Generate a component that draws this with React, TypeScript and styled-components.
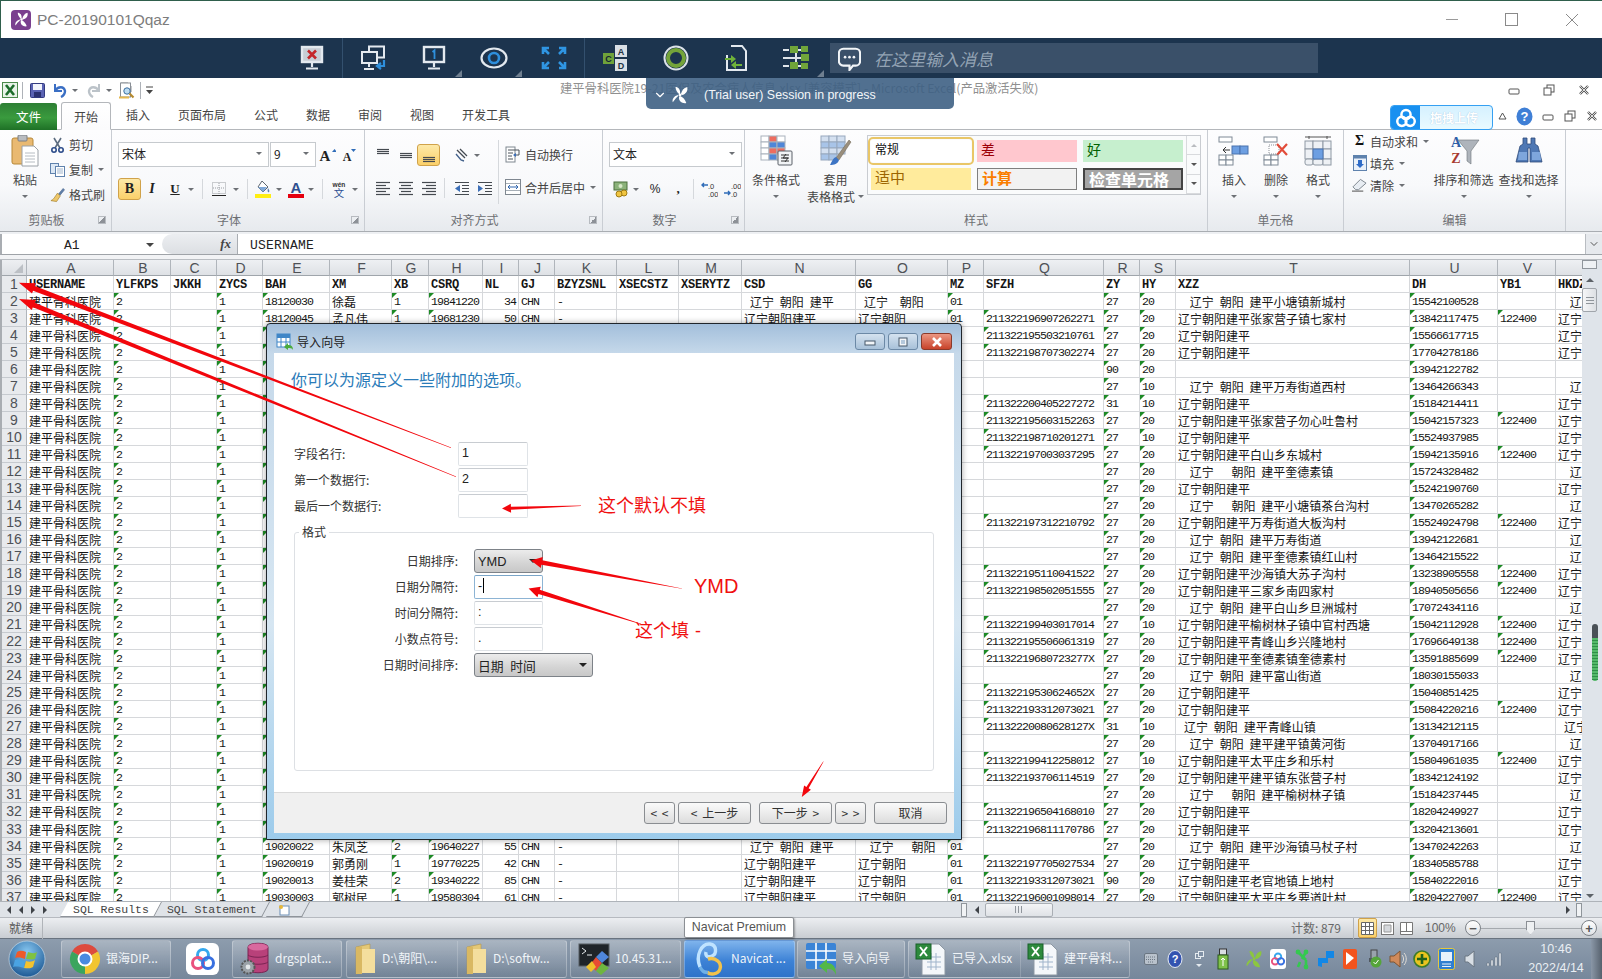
import React from 'react';
import styled, { createGlobalStyle } from 'styled-components';
import { ChevronDown } from 'lucide-react';

const CJK = `"Noto Sans CJK SC", "Liberation Sans", sans-serif`;
const SANS = `"Liberation Sans", "Noto Sans CJK SC", sans-serif`;
const MONO = `"Liberation Mono", "Noto Sans CJK SC", monospace`;

const Global = createGlobalStyle`
  html, body { margin: 0; padding: 0; width: 1602px; height: 979px; overflow: hidden; background: #fff; }
  body { font-family: ${CJK}; font-size: 12px; color: #333; }
  svg { display: block; }
  * { box-sizing: border-box; }
`;

/* ---------- page shell ---------- */
const Page = styled.div`
  position: relative; width: 1602px; height: 979px; overflow: hidden;
  display: flex; flex-direction: column;
`;
const TitleBar = styled.div`
  height: 38px; display: flex; align-items: center; padding-left: 10px;
  background: #fff; border-top: 1px solid #2f5f4c; border-left: 1px solid #2f5f4c;
`;
const AppLogo = styled.div`
  width: 20px; height: 20px; border-radius: 4px; background: #7a3f8f;
  display: flex; align-items: center; justify-content: center; margin-right: 6px;
`;
const TitleText = styled.div`
  font: 15.5px ${SANS}; color: #7d7d7d;
`;
const WinControls = styled.div`
  margin-left: auto; display: flex; padding-right: 0;
`;
const WinCtl = styled.div<{ $w: number }>`
  width: ${p => p.$w}px; display: flex; align-items: center; justify-content: center; height: 26px;
`;

const NavyBar = styled.div`
  height: 40px; background: #1c344e; display: flex; align-items: center; padding-left: 282px;
`;
const ToolBtn = styled.div<{ $corner?: boolean }>`
  position: relative; width: 60px; height: 40px; display: flex; align-items: center; justify-content: center;
  ${p => p.$corner ? `&::after { content: ''; position: absolute; right: 2px; bottom: 1px; border-style: solid; border-width: 0 0 7px 7px; border-color: transparent transparent #6f7f90 transparent; }` : ''}
`;
const ToolSep = styled.div`
  width: 1px; height: 40px; background: #33506e; margin-right: 1px;
`;
const ChatBox = styled.div`
  margin-left: 4px; width: 488px; height: 30px; background: #3a5069; display: flex; align-items: center;
  padding-left: 8px;
`;
const ChatHint = styled.div`
  margin-left: 13px; font-size: 17px; font-style: italic; color: #93a3b4; letter-spacing: 0;
`;

/* ---------- excel quick access + tabs ---------- */
const QatRow = styled.div`
  height: 24px; background: #fff; display: flex; align-items: center; padding-left: 2px;
`;
const QatItem = styled.div<{ $w: number; $ml?: number }>`
  width: ${p => p.$w}px; margin-left: ${p => p.$ml || 0}px; height: 20px; display: flex; align-items: center; justify-content: center;
`;
const QatSep = styled.div<{ $ml: number }>`
  width: 1px; height: 17px; background: #aeb2b8; margin-left: ${p => p.$ml}px;
`;
const DocTitle = styled.div`
  margin-left: 407px; font-size: 12.3px; color: #8f8f8f; white-space: nowrap; margin-top: -4px;
`;
const TabRow = styled.div`
  height: 28px; display: flex; align-items: flex-end; background: #fff;
  border-bottom: 1px solid #b4b7bb; position: relative;
`;
const FileTab = styled.div`
  width: 57px; height: 27px; margin-right: 4px; margin-bottom: -1px; color: #fff; font-size: 12.5px;
  display: flex; align-items: center; justify-content: center;
  background: linear-gradient(180deg, #2d7f34 0%, #3a9b3e 55%, #1e7026 100%); border-radius: 3px 3px 0 0;
`;
const HomeTab = styled.div`
  width: 50px; height: 28px; margin-right: 1px; margin-bottom: -1px; font-size: 12px; color: #444;
  display: flex; align-items: center; justify-content: center;
  background: linear-gradient(180deg, #fff, #fbfbfc); border: 1px solid #b4b7bb; border-bottom-color: #fbfbfc; border-radius: 3px 3px 0 0;
`;
const TabItem = styled.div`
  padding: 0 14px; height: 27px; line-height: 26px; font-size: 12px; color: #444;
`;
const RightCluster = styled.div`
  margin-left: auto; display: flex; align-items: center; height: 26px; margin-bottom: 0;
`;
const UploadPill = styled.div`
  width: 103px; height: 25px; margin-bottom: -3px; display: flex; border-radius: 4px; border: 1px solid #35a0f2; overflow: hidden;
  background: linear-gradient(180deg, #d5f1ff, #eafaff);
`;
const UploadLogo = styled.div`
  width: 29px; background: #1890f0; display: flex; align-items: center; justify-content: center;
`;
const UploadText = styled.div`
  margin-left: 10px; line-height: 23px; font-weight: 700; color: #fff; font-size: 12px; text-shadow: 0 0 1px #9bd; 
`;
const HelpSlot = styled.div<{ $w: number }>`
  width: ${p => p.$w}px; display: flex; justify-content: center; align-items: center;
`;

/* ---------- ribbon ---------- */
const Ribbon = styled.div`
  height: 102px; display: flex;
  background: linear-gradient(180deg, #fdfdfe 0%, #f8f9fb 55%, #e7eaee 100%);
  border-bottom: 1px solid #a9adb2;
`;
const Group = styled.div<{ $w: number }>`
  width: ${p => p.$w}px; display: flex; flex-direction: column; border-right: 1px solid #c9cdd3; flex: none;
`;
const GroupBody = styled.div<{ $pad?: string; $col?: boolean }>`
  height: 80px; display: flex; flex-direction: ${p => p.$col ? 'column' : 'row'}; padding: ${p => p.$pad || '0'};
`;
const GroupLabel = styled.div<{ $launch?: boolean }>`
  position: relative; height: 21px; line-height: 20px; text-align: center; color: #6d6f73; font-size: 12px;
  padding-right: ${p => p.$launch ? 18 : 0}px;
`;
const Launcher = styled.i`
  position: absolute; right: 5px; top: 6px; width: 8px; height: 8px; border: 1px solid #b7bbc0; border-top-width: 1px;
  background: linear-gradient(135deg, transparent 50%, #8d9197 50%);
`;
const BigBtn = styled.div<{ $w: number; $ml?: number; $mr?: number; $auto?: boolean }>`
  width: ${p => p.$w}px; padding-top: 5px; display: flex; flex-direction: column; align-items: center; flex: none;
  margin-left: ${p => p.$auto ? 'auto' : `${p.$ml || 0}px`}; margin-right: ${p => p.$mr || 0}px;
`;
const BigIcon = styled.div`
  height: 32px; margin-bottom: 4px; display: flex; align-items: center; justify-content: center;
`;
const BigLabel = styled.div`
  line-height: 17px; color: #444; font-size: 12px; white-space: nowrap; display: flex; align-items: center;
`;
const BigCaret = styled.div`
  height: 17px; display: flex; align-items: center; justify-content: center;
`;
const Caret = styled.i<{ $ml?: number }>`
  display: inline-block; width: 0; height: 0; border-left: 3px solid transparent; border-right: 3px solid transparent;
  border-top: 3px solid #6d7075; margin-left: ${p => p.$ml || 0}px; flex: none;
`;
const SmallCol = styled.div<{ $ml?: number; $pt: number }>`
  margin-left: ${p => p.$ml || 0}px; padding-top: ${p => p.$pt}px; display: flex; flex-direction: column; flex: none;
`;
const SmallRow = styled.div<{ $h: number; $mt?: number }>`
  height: ${p => p.$h}px; margin-top: ${p => p.$mt || 0}px; padding-bottom: 2px; display: flex; align-items: center; color: #444; font-size: 12px; white-space: nowrap;
`;
const RowIcon = styled.div<{ $w: number; $mr: number }>`
  width: ${p => p.$w}px; margin-right: ${p => p.$mr}px; display: flex; justify-content: center; align-items: center; flex: none;
`;
const SigmaGlyph = styled.span`
  font: 700 14px "Liberation Serif", serif; color: #111;
`;
const ComboBox = styled.div<{ $w: number; $ml?: number }>`
  width: ${p => p.$w}px; margin-left: ${p => p.$ml || 0}px; height: 25px; background: #fff; border: 1px solid #c6cace; flex: none;
  display: flex; align-items: center; justify-content: space-between; padding: 0 6px 2px 3px; color: #222; font-size: 12px;
`;
const ToolRow = styled.div<{ $mt?: number }>`
  display: flex; align-items: center; height: 22px; margin-top: ${p => p.$mt || 0}px;
`;
const ComboRow = styled.div`
  display: flex; align-items: center; height: 25px;
`;
const Slot = styled.div<{ $w: number; $ml?: number; $on?: boolean }>`
  width: ${p => p.$w}px; margin-left: ${p => p.$ml || 0}px; height: 22px; display: flex; align-items: center; justify-content: center; flex: none;
  color: #222; font-family: ${SANS};
  ${p => p.$on ? `background: linear-gradient(180deg,#fde9a8,#fbd06a); border: 1px solid #d0a24a; border-radius: 3px;` : ''}
`;
const SerifGlyph = styled.span<{ $i?: boolean; $u?: boolean; $size: number }>`
  font: ${p => p.$i ? 'italic ' : ''}700 ${p => p.$size}px "Liberation Serif", serif; color: #222;
  text-decoration: ${p => p.$u ? 'underline' : 'none'};
`;
const VSep = styled.div<{ $ml?: number }>`
  width: 1px; height: 20px; background: #d5d8dc; margin-left: ${p => p.$ml || 0}px; flex: none;
`;
const TallSep = styled.div`
  width: 1px; height: 64px; background: #d5d8dc; margin-top: 10px; margin-left: 0; flex: none;
`;
const AlignCol = styled.div`
  width: 127px; padding-top: 14px; flex: none;
`;
const WrapCol = styled.div`
  padding: 14px 0 0 6px; flex: none;
`;
const Gallery = styled.div`
  width: 334px; height: 60px; margin: 5px 0 0 2px; border: 1px solid #c9ccd1; background: #fafbfc; display: flex; flex: none;
`;
const GalleryGrid = styled.div`
  display: grid; grid-template-columns: repeat(3, 100px); grid-template-rows: 22px 22px; gap: 6px; padding: 4px 0 0 3px;
`;
const StyleCell = styled.div<{ $bg: string; $fg: string; $size: number; $bold?: boolean; $bd?: string; $sel?: boolean }>`
  background: ${p => p.$bg}; color: ${p => p.$fg}; font-size: ${p => p.$size}px; font-weight: ${p => p.$bold ? 700 : 400};
  line-height: 18px; padding-left: 4px; white-space: nowrap; overflow: hidden;
  border: ${p => p.$bd || 'none'};
  ${p => p.$sel ? `outline: 2px solid #e9c667; outline-offset: 1px; border-radius: 2px;` : ''}
`;
const GalleryScroll = styled.div`
  margin-left: auto; width: 14px; border-left: 1px solid #d8dadd; display: flex; flex-direction: column;
`;
const GalleryStep = styled.div`
  flex: 1; display: flex; align-items: center; justify-content: center; border-bottom: 1px solid #d8dadd;
`;

/* ---------- formula bar ---------- */
const FormulaStrip = styled.div`
  height: 2px; background: #eef0f3;
`;
const FormulaBar = styled.div`
  height: 21px; display: flex; align-items: stretch; background: #fff; border-bottom: 1px solid #9fa3a8; border-left: 2px solid #a9adb2;
`;
const NameBox = styled.div`
  width: 160px; padding: 2px 0 0 62px; display: flex; align-items: center; font: 13px ${MONO}; color: #222; flex: none;
`;
const NameCaret = styled.i`
  width: 0; height: 0; border-left: 4px solid transparent; border-right: 4px solid transparent; border-top: 4px solid #444; margin-left: 66px;
`;
const FxSlot = styled.div`
  width: 76px; background: linear-gradient(180deg, #eceef1, #dcdfe3); border-radius: 10px 0 0 10px; border-right: 1px solid #a9adb2;
  display: flex; align-items: center; justify-content: flex-end; padding-right: 6px; flex: none;
`;
const FxText = styled.span`
  font: italic 700 13px "Liberation Serif", serif; color: #444;
`;
const FormulaText = styled.div`
  margin-left: 12px; padding-top: 2px; font: 13px/20px ${MONO}; color: #222; letter-spacing: .2px;
`;
const FormulaEnd = styled.div`
  margin-left: auto; width: 17px; display: flex; align-items: center; justify-content: center; background: #e6e9ed; border-left: 1px solid #b9bdc2;
`;
const GapStrip = styled.div`
  height: 5px; background: #f2f3f5; border-bottom: 1px solid #b9bdc2;
`;

/* ---------- sheet ---------- */
const SheetArea = styled.div`
  height: 641px; display: flex;
`;
const GridViewport = styled.div`
  width: 1582px; height: 641px; overflow: hidden; flex: none; border-left: 2px solid #a9adb2;
`;
const COLS = [25, 87, 57, 46, 46, 67, 62, 37, 54, 36, 36, 62, 62, 63, 114, 92, 36, 120, 36, 36, 234, 88, 58, 28];
const GridTable = styled.div`
  display: grid; grid-template-columns: ${COLS.map(c => c + 'px').join(' ')};
  grid-template-rows: 16px; grid-auto-rows: 17.03px;
`;
const Corner = styled.div`
  position: relative; background: linear-gradient(180deg, #edeff2, #dde0e4); border-right: 1px solid #b0b5bb; border-bottom: 1px solid #9fa5ab;
  &::after { content: ''; position: absolute; right: 3px; bottom: 2px; border-style: solid; border-width: 0 0 9px 9px; border-color: transparent transparent #bcc0c5 transparent; }
`;
const ColHead = styled.div`
  background: linear-gradient(180deg, #eef0f3, #dee1e5); border-right: 1px solid #b0b5bb; border-bottom: 1px solid #9fa5ab;
  text-align: center; padding-left: 2px; font: 14px/16px ${SANS}; color: #4e5156;
`;
const RowHead = styled.div`
  background: #e8eaed; border-right: 1px solid #b0b5bb; border-bottom: 1px solid #c6cacf;
  text-align: center; font: 14px/17px ${SANS}; color: #4e5156;
`;
const Cell = styled.div<{ $kind: 'cjk' | 'num' | 'head'; $tri?: boolean; $right?: boolean }>`
  position: relative; background: #fff; border-right: 1px solid #d6d8db; border-bottom: 1px solid #d6d8db;
  overflow: hidden; white-space: pre; padding: 0 2px; color: #151515; text-align: ${p => p.$right ? 'right' : 'left'};
  ${p => p.$kind === 'cjk' && `font: 12px/17px ${CJK}; word-spacing: 3.2px;`}
  ${p => p.$kind === 'num' && `font: 11.6px/18px ${MONO}; letter-spacing: -.96px;`}
  ${p => p.$kind === 'head' && `font: 700 12px/18px ${MONO}; letter-spacing: -.2px;`}
  ${p => p.$tri ? `&::before { content: ''; position: absolute; left: 0; top: 0; border-style: solid; border-width: 5px 5px 0 0; border-color: #1d8a25 transparent transparent transparent; }` : ''}
`;

const VScroll = styled.div`
  position: relative; width: 20px; background: #dfe4ea; display: flex; flex-direction: column; align-items: stretch; flex: none;
`;
const SplitBtn = styled.div`
  height: 9px; width: 15px; background: #eef1f4; border: 1px solid #8f959b; margin: 0 0 5px 0;
`;
const ArrowBox = styled.div`
  height: 11px; width: 15px; display: flex; justify-content: center; align-items: center;
`;
const Tri = styled.i<{ $dir: 'u' | 'd' | 'l' | 'r'; $s?: number; $c?: string; $ml?: number }>`
  width: 0; height: 0; display: block; border: ${p => p.$s || 4}px solid transparent; margin-left: ${p => p.$ml || 0}px;
  ${p => p.$dir === 'u' && `border-top: 0; border-bottom-color: ${p.$c || '#5d6268'};`}
  ${p => p.$dir === 'd' && `border-bottom: 0; border-top-color: ${p.$c || '#5d6268'};`}
  ${p => p.$dir === 'l' && `border-left: 0; border-right-color: ${p.$c || '#3f4348'};`}
  ${p => p.$dir === 'r' && `border-right: 0; border-left-color: ${p.$c || '#3f4348'};`}
`;
const VThumb = styled.div`
  width: 15px; height: 24px; margin-top: 3px; background: linear-gradient(90deg, #f5f6f8, #dde0e4); border: 1px solid #a0a5ab; border-radius: 2px;
  display: flex; align-items: center; justify-content: center;
`;
const GripLines = styled.div`
  width: 8px; height: 7px; background: repeating-linear-gradient(180deg, #8f959b 0 1px, transparent 1px 3px);
`;
const VSpacer = styled.div`
  flex: 1;
`;
const LevelPill = styled.div`
  position: absolute; left: 10px; top: 364px; width: 6px; height: 57px; border-radius: 3px;
  background: linear-gradient(180deg, #4a5157 0, #4a5157 24%, #55b96a 24%, #55b96a 100%);
  &::after { content: ''; position: absolute; inset: 14px 0 0 0; background: repeating-linear-gradient(180deg, transparent 0 2px, #2f8f47 2px 3px); }
`;

/* ---------- sheet tabs / status ---------- */
const SheetTabsBar = styled.div`
  height: 16px; display: flex; background: #dfe3e8; border-top: 1px solid #aeb3b9;
`;
const TabNav = styled.div`
  width: 64px; display: flex; align-items: center; padding-left: 7px; gap: 8px; flex: none;
`;
const SheetTab = styled.div<{ $active?: boolean }>`
  position: relative; z-index: 0; height: 15px; padding: 0 9px; font: 11.5px/15px ${MONO}; color: #444; margin-right: ${p => p.$active ? 0 : 4}px; white-space: nowrap;
  &::before { content: ''; position: absolute; inset: 0; z-index: -1; transform: skewX(-28deg);
    background: ${p => p.$active ? '#fff' : 'transparent'}; border-right: 1px solid #8f949a; border-bottom: 1px solid #8f949a; }
`;
const NewSheet = styled(SheetTab)`
  width: 36px; padding: 0 8px; display: flex; align-items: center;
`;
const TabSpacer = styled.div`
  width: 651px; flex: none;
`;
const HScroll = styled.div`
  flex: 1; display: flex; align-items: center; padding-left: 0; margin-right: 20px; background: #dfe3e8;
`;
const HSplit = styled.div<{ $ml?: number }>`
  width: 6px; height: 14px; margin-left: ${p => p.$ml || 0}px; background: #f1f3f5; border: 1px solid #8f959b; flex: none;
`;
const HThumb = styled.div`
  width: 68px; height: 14px; margin-left: 6px; background: linear-gradient(180deg, #f4f5f7, #dfe2e6); border: 1px solid #a9aeb4; border-radius: 2px;
  display: flex; align-items: center; justify-content: center; flex: none;
`;
const HGrip = styled.div`
  width: 7px; height: 7px; background: repeating-linear-gradient(90deg, #8f959b 0 1px, transparent 1px 3px);
`;
const StatusBar = styled.div`
  height: 22px; display: flex; align-items: center; padding-right: 5px;
  background: linear-gradient(180deg, #eceef1, #c9cdd2); border-top: 1px solid #b6bac0; border-bottom: 1px solid #6a7480; color: #666; font-size: 12px;
`;
const StatusReady = styled.div`
  width: 43px; height: 21px; line-height: 20px; padding-left: 9px; border-right: 1px solid #b0b4b9; color: #555;
`;
const StatusCount = styled.div`
  margin-left: auto; width: 63px; border-right: 1px solid #b0b4b9; height: 21px; line-height: 20px; margin-right: 4px; font-family: ${CJK}; color: #666;
`;
const ViewBtn = styled.div<{ $w: number; $on?: boolean }>`
  width: ${p => p.$w}px; height: 20px; display: flex; align-items: center; justify-content: center;
  ${p => p.$on ? `background: linear-gradient(180deg,#fde9a8,#fbd06a); border: 1px solid #d0a24a; border-radius: 2px;` : ''}
`;
const ZoomPct = styled.div`
  width: 40px; margin-left: 9px; font: 12px ${SANS}; color: #666;
`;
const ZoomCircle = styled.div`
  width: 16px; height: 16px; border-radius: 50%; border: 1px solid #7d8288; background: linear-gradient(180deg, #fff, #dfe1e4);
  display: flex; align-items: center; justify-content: center; color: #555; font: 700 13px/13px ${SANS}; flex: none;
`;
const ZoomTrack = styled.div`
  position: relative; width: 100px; height: 1px; background: #a5a9ae; flex: none;
`;
const ZoomThumb = styled.div`
  position: absolute; left: 45px; top: -7px; width: 9px; height: 14px; background: #eef0f2; border: 1px solid #8a8e94;
  clip-path: polygon(0 0, 100% 0, 100% 65%, 50% 100%, 0 65%);
`;

/* ---------- taskbar ---------- */
const Taskbar = styled.div`
  flex: 1; display: flex; background: linear-gradient(180deg, #8d9cad, #76879b);
`;
const OrbSlot = styled.div`
  width: 61px; display: flex; align-items: center; justify-content: center; padding-right: 8px; flex: none;
`;
const TaskBtn = styled.div<{ $w: number; $ml?: number; $active?: boolean }>`
  width: ${p => p.$w}px; margin: 1px 0 1px ${p => p.$ml || 0}px; display: flex; align-items: center; flex: none; padding-left: 7px; gap: 5px;
  border: 1px solid rgba(255,255,255,.28); border-radius: 3px; color: #f0f4f8; font-size: 12px; white-space: nowrap; overflow: hidden;
  background: ${p => p.$active
    ? 'linear-gradient(180deg,#7fb4ec,#3d82d6 55%,#2e73c9)'
    : 'linear-gradient(180deg,rgba(255,255,255,.26),rgba(255,255,255,.1) 50%,rgba(0,0,0,.04))'};
`;
const TaskLabel = styled.span`
  margin-top: -4px;
`;
const TaskSeg = styled.div<{ $w: number }>`
  width: ${p => p.$w}px; height: 100%; display: flex; align-items: center; gap: 5px; padding-left: 6px; flex: none;
  & + & { border-left: 1px solid rgba(255,255,255,.18); }
`;
const TaskGroup = styled(TaskBtn)`
  padding-left: 0; gap: 0;
`;
const PlainIcon = styled.div`
  width: 61px; display: flex; align-items: center; justify-content: center; flex: none; padding-left: 2px;
`;
const Tray = styled.div`
  flex: 1; display: flex; align-items: center; padding-left: 9px;
`;
const TraySlot = styled.div<{ $ml?: number }>`
  width: 24px; margin-left: ${p => p.$ml || 0}px; display: flex; align-items: center; justify-content: center; flex: none;
`;
const Clock = styled.div`
  width: 70px; margin-left: 15px; text-align: center; color: #e9eef3; font: 12.5px/19px ${SANS}; flex: none;
`;
const ShowDesk = styled.div`
  margin-left: auto; width: 11px; height: 100%; background: linear-gradient(90deg, #8a97a7, #56616d);
`;
const TrayStack = styled.div`
  display: flex; flex-direction: column; align-items: center; gap: 5px; color: #e5ebf0;
`;

/* ---------- overlays ---------- */
const Toast = styled.div`
  position: absolute; left: 646px; top: 78px; width: 308px; height: 31px; border-radius: 0 0 5px 5px;
  background: rgba(62, 97, 132, .9); display: flex; align-items: center; padding: 3px 0 0 7px; color: #fff;
`;
const ToastFan = styled.div`
  margin-left: 4px;
`;
const ToastText = styled.div`
  margin-left: 15px; font: 12.4px ${SANS}; color: #f3f6f9; white-space: nowrap;
`;
const Tip = styled.div`
  position: absolute; left: 684px; top: 917px; width: 110px; height: 21px; background: #fff; border: 1px solid #8b8f94;
  border-radius: 2px; font: 12.4px/19px ${SANS}; color: #555; text-align: center; box-shadow: 1px 1px 2px rgba(0,0,0,.3);
`;

/* ---------- dialog ---------- */
const Dialog = styled.div`
  position: absolute; left: 266px; top: 323px; width: 696px; height: 517px; display: flex; flex-direction: column;
  border: 1px solid #20262c; border-radius: 4px 4px 0 0; box-shadow: 0 0 6px rgba(0,0,0,.35);
  background: linear-gradient(180deg, #a3bfdb 0, #c6d9ea 30px, #d6e6f2 300px, #9ccbeb 100%);
`;
const DlgTitle = styled.div`
  height: 29px; display: flex; align-items: center; padding: 6px 9px 0 9px; flex: none;
`;
const DlgTitleText = styled.div`
  margin-left: 3px; font-size: 12px; color: #222; letter-spacing: .1px;
`;
const DlgWinBtns = styled.div`
  margin-left: auto; display: flex; gap: 3px;
`;
const DlgWinBtn = styled.div<{ $close?: boolean }>`
  width: ${p => p.$close ? 31 : 30}px; height: 17px; border-radius: 3px; display: flex; align-items: center; justify-content: center;
  border: 1px solid ${p => p.$close ? '#8a3a2a' : '#6c89a6'};
  background: ${p => p.$close ? 'linear-gradient(180deg,#eb9682,#c8432a)' : 'linear-gradient(180deg,#d4e2ef,#a8c1d9)'};
  color: #fff;
`;
const DlgClient = styled.div`
  flex: 1; margin: 0 7px 6px 7px; background: #fff; display: flex; flex-direction: column; min-height: 0;
`;
const DlgContent = styled.div`
  flex: 1; padding: 15px 19px 0 20px; position: relative;
`;
const DlgHeading = styled.div`
  font-size: 16px; line-height: 22px; color: #2b7cb9; margin-left: -3px; white-space: nowrap;
`;
const FormList = styled.div<{ $mt: number }>`
  margin-top: ${p => p.$mt}px; display: flex; flex-direction: column; gap: 2px;
`;
const FormLine = styled.div`
  display: flex; align-items: center; height: 24px; font-size: 12px; color: #333;
`;
const FormLabel = styled.div<{ $w: number; $right?: boolean }>`
  width: ${p => p.$w}px; text-align: ${p => p.$right ? 'right' : 'left'}; white-space: nowrap; padding-bottom: 2px; flex: none;
`;
const TextField = styled.div<{ $w: number; $focus?: boolean; $ml?: number }>`
  width: ${p => p.$w}px; height: 24px; margin-left: ${p => p.$ml || 0}px; background: #fff; flex: none; border-radius: 2px;
  border: 1px solid ${p => p.$focus ? '#8db4d4' : '#dfe3e7'}; border-top-color: ${p => p.$focus ? '#7aa5c8' : '#c8ccd1'};
  padding-left: 3px; font: 12.5px/20px ${SANS}; color: #222; position: relative;
`;
const TextCaret = styled.i`
  display: inline-block; width: 1px; height: 15px; background: #000; vertical-align: -3px; margin-left: 1px;
`;
const FormatGroup = styled.div`
  position: relative; width: 640px; height: 239px; margin-top: 14px; border: 1px solid #dde0e4; border-radius: 3px; padding: 16px 0 0 0;
`;
const Legend = styled.div`
  position: absolute; left: 4px; top: -9px; padding: 0 3px; background: #fff; font-size: 12px; line-height: 16px; color: #333;
`;
const SelectBox = styled.div<{ $w: number; $ml: number }>`
  width: ${p => p.$w}px; height: 24px; margin-left: ${p => p.$ml}px; flex: none; border: 1px solid #7d8288; border-radius: 3px;
  background: linear-gradient(180deg, #ececec, #d4d4d4 60%, #c8c8c8); display: flex; align-items: center; justify-content: space-between;
  padding: 0 5px 0 3px; font: 12.8px ${SANS}; color: #222; word-spacing: 3px;
`;
const DlgFooter = styled.div`
  height: 41px; background: #f0f0f0; border-top: 1px solid #d9d9d9; display: flex; justify-content: flex-end; padding: 9px 7px 0 0; flex: none;
`;
const DlgButton = styled.div<{ $w: number; $ml: number }>`
  width: ${p => p.$w}px; margin-left: ${p => p.$ml}px; height: 22px; border: 1px solid #8a8d91; border-radius: 3px;
  background: linear-gradient(180deg, #fafafa, #ececec 50%, #dcdcdc); font: 12px/20px ${CJK}; text-align: center; color: #333; white-space: pre; word-spacing: 2px;
`;
const AnnotLayer = styled.svg`
  position: absolute; left: 0; top: 0; width: 1602px; height: 979px; pointer-events: none;
`;
const Note = styled.div<{ $x: number; $y: number; $size: number }>`
  position: absolute; left: ${p => p.$x}px; top: ${p => p.$y}px; font: ${p => p.$size}px/24px ${SANS}; color: #f01010; white-space: pre; word-spacing: 1px;
`;

/* ---------- icons ---------- */
const S = ({ w, h, children }: { w: number; h: number; children?: React.ReactNode }) => (
  <svg width={w} height={h} viewBox={`0 0 ${w} ${h}`}>{children}</svg>
);
const MON = '#e3e9ef';
const MonBase = ({ fill = 'none' }: { fill?: string }) => (
  <>
    <rect x="3" y="2" width="20" height="15" fill={fill} stroke={MON} strokeWidth="2.4" />
    <path d="M13 18v4M7 23.5h12" stroke={MON} strokeWidth="2.2" />
  </>
);
const IcoRemoteOff = () => (
  <S w={26} h={26}><MonBase fill="#c7ced6" /><path d="M9 5.5l8 8M17 5.5l-8 8" stroke="#c4262a" strokeWidth="2.6" /></S>
);
const IcoTransfer = () => (
  <S w={28} h={26}>
    <rect x="9" y="1.5" width="15" height="11" fill="#1c344e" stroke={MON} strokeWidth="2" />
    <rect x="2" y="7" width="15" height="11" fill="#1c344e" stroke={MON} strokeWidth="2" />
    <path d="M9 19v3M4 24h10" stroke={MON} strokeWidth="2" />
    <path d="M24 15v6h-6M21 18l-4 3 4 3" fill="none" stroke="#2e8fdc" strokeWidth="2.2" />
  </S>
);
const IcoScreenOne = () => (
  <S w={26} h={26}><MonBase /><path d="M11.5 7l2-1.6V14" fill="none" stroke="#2e8fdc" strokeWidth="1.8" /></S>
);
const IcoEye = () => (
  <S w={28} h={22}>
    <ellipse cx="14" cy="11" rx="12.5" ry="9.5" fill="none" stroke={MON} strokeWidth="2.2" />
    <circle cx="14" cy="11" r="5" fill="none" stroke="#2e8fdc" strokeWidth="2.6" />
  </S>
);
const IcoExpand = () => (
  <S w={26} h={24}>
    <g fill="none" stroke="#2f95e2" strokeWidth="2.6">
      <path d="M2 8V2h6M2 2l6 6M24 8V2h-6M24 2l-6 6M2 16v6h6M2 22l6-6M24 16v6h-6M24 22l-6-6" />
    </g>
  </S>
);
const IcoDrives = () => (
  <S w={28} h={28}>
    <rect x="1" y="9" width="11" height="11" fill="#6fa23a" />
    <rect x="13" y="1" width="12" height="12" fill="#d9dfe5" />
    <rect x="13" y="15" width="12" height="12" fill="#d9dfe5" />
    <text x="6.5" y="18" fontSize="9" fontWeight="700" textAnchor="middle" fill="#123" fontFamily="Liberation Sans">C</text>
    <text x="19" y="10.5" fontSize="9" fontWeight="700" textAnchor="middle" fill="#234" fontFamily="Liberation Sans">A</text>
    <text x="19" y="24.5" fontSize="9" fontWeight="700" textAnchor="middle" fill="#234" fontFamily="Liberation Sans">D</text>
  </S>
);
const IcoRing = () => (
  <S w={26} h={26}>
    <circle cx="13" cy="13" r="11.5" fill="none" stroke="#dbe2e8" strokeWidth="2" />
    <circle cx="13" cy="13" r="8" fill="none" stroke="#74a43a" strokeWidth="4" />
  </S>
);
const IcoFileSwap = () => (
  <S w={24} h={26}>
    <path d="M7 1h11l4 5v19H3V10" fill="none" stroke={MON} strokeWidth="2" />
    <path d="M1 13h6V10l5 4-5 4v-3H1zM18 21h-6v3l-5-4 5-4v3h6z" fill="#6fb23a" />
  </S>
);
const IcoTree = () => (
  <S w={28} h={26}>
    <path d="M1 13h26M14 5v16M14 5h6M14 21h6M1 5h6M1 21h6" stroke="#dfe5ea" strokeWidth="2" />
    <rect x="8" y="1" width="8" height="7" fill="#70a53a" /><rect x="19" y="9" width="8" height="7" fill="#70a53a" />
    <rect x="8" y="17" width="8" height="7" fill="#70a53a" /><rect x="19" y="1" width="7" height="6" fill="#70a53a" /><rect x="19" y="18" width="7" height="6" fill="#70a53a" />
  </S>
);
const IcoChat = () => (
  <svg width="23" height="25" viewBox="0 0 26 28">
    <path d="M6 3h14a5 5 0 015 5v9a5 5 0 01-5 5h-3l-4 5v-5H6a5 5 0 01-5-5V8a5 5 0 015-5z" fill="none" stroke="#f2f5f8" strokeWidth="2.4" />
    <circle cx="8" cy="12.5" r="1.5" fill="#f2f5f8" /><circle cx="13" cy="12.5" r="1.5" fill="#f2f5f8" /><circle cx="18" cy="12.5" r="1.5" fill="#f2f5f8" />
  </svg>
);
const FanMark = ({ size = 14, c = '#fff' }: { size?: number; c?: string }) => (
  <svg width={size} height={size} viewBox="0 0 20 20">
    <path d="M11 9c1-4 3-7 7-8 1 4-1 8-6 9zM9 9C7 7 5 4 5 1c3 0 6 3 5 8zM10 11c3 1 6 4 7 8-4 1-9-2-8-7zM8 11c-2 2-4 4-6 7-1-3 1-7 6-8z" fill={c} />
    <circle cx="10" cy="10" r="1.6" fill={c} />
  </svg>
);
const BaiduMark = ({ size = 20, a = '#fff', b = '#fff', c = '#fff', sw = 3 }: { size?: number; a?: string; b?: string; c?: string; sw?: number }) => (
  <svg width={size} height={size} viewBox="0 0 24 24" fill="none" strokeWidth={sw}>
    <circle cx="12" cy="8" r="5.5" stroke={a} />
    <circle cx="7" cy="16" r="5.5" stroke={b} />
    <circle cx="17" cy="16" r="5.5" stroke={c} />
  </svg>
);
const XMark = ({ s = 14, c = '#666', sw = 1 }: { s?: number; c?: string; sw?: number }) => (
  <svg width={s} height={s} viewBox="0 0 14 14"><path d="M1 1l12 12M13 1L1 13" stroke={c} strokeWidth={sw} /></svg>
);
const MiniMin = () => <S w={12} h={10}><rect x="1" y="4" width="10" height="5" rx="1" fill="#fff" stroke="#555" /></S>;
const MiniRestore = () => <S w={12} h={12}><rect x="4" y="1" width="7" height="7" fill="#fff" stroke="#555" /><rect x="1" y="4" width="7" height="7" fill="#fff" stroke="#555" /></S>;
const MiniClose = () => <S w={12} h={12}><path d="M2 2l8 8M10 2l-8 8" stroke="#555" strokeWidth="2.4" /><path d="M2 2l8 8M10 2l-8 8" stroke="#fff" strokeWidth=".8" /></S>;

const IcoXlQat = () => (
  <S w={16} h={16}><rect x=".5" y=".5" width="15" height="15" fill="#e8f3e8" stroke="#4b8a4b" /><path d="M4 3l8 10M12 3L4 13" stroke="#1c6d2a" strokeWidth="2.6" /></S>
);
const IcoSave = () => (
  <S w={15} h={15}><rect x=".5" y=".5" width="14" height="14" rx="1" fill="#5b63b3" stroke="#333a80" /><rect x="3" y="1" width="9" height="6" fill="#f2f4fb" /><rect x="4" y="9" width="7" height="5" fill="#2c3170" /></S>
);
const IcoUndo = ({ c = '#3b6fc4' }: { c?: string }) => (
  <S w={14} h={15}><path d="M2 1v7h7" fill="none" stroke={c} strokeWidth="2" /><path d="M2 8c3-5 9-5 10 0 0 3-2 5-4 6" fill="none" stroke={c} strokeWidth="2.4" /></S>
);
const IcoRedo = () => (
  <S w={14} h={15}><path d="M12 1v7H5" fill="none" stroke="#bcc3c9" strokeWidth="2" /><path d="M12 8C9 3 3 3 2 8c0 3 2 5 4 6" fill="none" stroke="#bcc3c9" strokeWidth="2.4" /></S>
);
const IcoPreview = () => (
  <S w={16} h={17}><path d="M2 1h7l3 3v6" fill="#fff" stroke="#8a8f96" /><rect x="1.5" y="1" width="10" height="14" fill="#fff" stroke="#8a8f96" /><circle cx="8" cy="9" r="3.2" fill="#bcdcf2" stroke="#3d6fa0" /><path d="M10.5 11.5l4 4" stroke="#b58a2e" strokeWidth="2.2" /><rect x="0" y="14.5" width="10" height="2" fill="#e5b84f" /></S>
);
const IcoCustom = () => <S w={7} h={9}><path d="M0 1h7" stroke="#444" /><path d="M0 4h7l-3.5 4z" fill="#444" /></S>;

const IcoPaste = () => (
  <S w={28} h={32}>
    <rect x="1" y="3" width="21" height="26" rx="2" fill="#e9b971" stroke="#b78838" />
    <rect x="7" y="0" width="9" height="6" rx="1" fill="#b9bcc0" stroke="#7b7e83" />
    <path d="M11 11h12l4 4v16H11z" fill="#fff" stroke="#9aa0a6" />
    <path d="M14 18h10M14 21h10M14 24h10M14 27h10" stroke="#b6bcc2" />
  </S>
);
const IcoScissors = () => (
  <S w={13} h={16}><path d="M3 1l6 10M10 1L4 11" stroke="#5d6d80" strokeWidth="1.6" /><circle cx="3" cy="13" r="2.2" fill="none" stroke="#2c4c8a" strokeWidth="1.6" /><circle cx="10" cy="13" r="2.2" fill="none" stroke="#2c4c8a" strokeWidth="1.6" /></S>
);
const IcoCopy = () => (
  <S w={15} h={14}><rect x=".5" y=".5" width="8" height="10" fill="#dce8f5" stroke="#5f82ad" /><rect x="5.5" y="3.5" width="9" height="10" fill="#fff" stroke="#5f82ad" /><path d="M7 6h6M7 8h6M7 10h6" stroke="#9fb4cc" /></S>
);
const IcoBrush = () => (
  <S w={16} h={16}><path d="M9 7l5-6 1.5 1.5-5 6z" fill="#5f7fa8" stroke="#44618a" strokeWidth=".6" /><path d="M8 6l3 3-4 6-6-1c3-1 4-4 7-8z" fill="#edc76b" stroke="#a27d28" strokeWidth=".7" /></S>
);
const Lines = ({ rows }: { rows: [number, number, number][] }) => (
  <S w={16} h={16}><g stroke="#454a50" strokeWidth="1.2">{rows.map((r, i) => <path key={i} d={`M${r[0]} ${r[2]}.5H${r[1]}`} />)}</g></S>
);
const AL_T: [number, number, number][] = [[2, 14, 2], [2, 14, 4], [2, 14, 6]];
const AL_M: [number, number, number][] = [[2, 14, 6], [2, 14, 8], [2, 14, 10]];
const AL_B: [number, number, number][] = [[2, 14, 10], [2, 14, 12], [2, 14, 14]];
const AH_L: [number, number, number][] = [[1, 15, 2], [1, 11, 5], [1, 15, 8], [1, 11, 11], [1, 15, 14]];
const AH_C: [number, number, number][] = [[1, 15, 2], [3, 13, 5], [1, 15, 8], [3, 13, 11], [1, 15, 14]];
const AH_R: [number, number, number][] = [[1, 15, 2], [5, 15, 5], [1, 15, 8], [5, 15, 11], [1, 15, 14]];
const IcoOrient = () => (
  <S w={16} h={16}><path d="M3 3l8 8M6 2l7 7" stroke="#444a52" strokeWidth="1.3" /><path d="M2 7l5 6 3 1" fill="none" stroke="#44628c" strokeWidth="1.4" /></S>
);
const IcoIndent = ({ flip }: { flip?: boolean }) => (
  <S w={16} h={16}>
    <g stroke="#454a50" strokeWidth="1.2"><path d="M1 2.5h14M8 5.5h7M8 8.5h7M8 11.5h7M1 14.5h14" /></g>
    <path d={flip ? 'M1 5l5 3.5-5 3.5z' : 'M6 5L1 8.5 6 12z'} fill="#3c6fb8" />
  </S>
);
const IcoWrap = () => (
  <S w={16} h={17}><rect x="1" y="1" width="9" height="15" fill="#fff" stroke="#7f8790" /><path d="M3 4h11v5H9M3 7h5M3 10h4M3 13h5" fill="none" stroke="#4b525a" /><path d="M11 7l-3 2 3 2z" fill="#3c6fb8" /></S>
);
const IcoMerge = () => (
  <S w={16} h={16}><rect x=".5" y=".5" width="15" height="15" fill="#fff" stroke="#7f8790" /><path d="M1 4.5h14M1 11.5h14" stroke="#a7afb7" /><path d="M3 8h10M3 8l2-2M3 8l2 2M13 8l-2-2M13 8l-2 2" stroke="#2e64ad" fill="none" /></S>
);
const IcoCurrency = () => (
  <S w={16} h={17}><rect x="1" y="1" width="13" height="8" fill="#8bb27a" stroke="#4a6f3c" /><circle cx="7.5" cy="5" r="2" fill="#d8e8c8" /><circle cx="11" cy="12" r="3" fill="#f1c541" stroke="#a07c15" /><circle cx="6" cy="13" r="3" fill="#f1c541" stroke="#a07c15" /></S>
);
const IcoDec = ({ add }: { add?: boolean }) => (
  <S w={18} h={17}>
    <text x="8" y="7.5" fontSize="7.5" fontFamily="Liberation Sans" fill="#333">{add ? '.0' : '.00'}</text>
    <text x="8" y="15.5" fontSize="7.5" fontFamily="Liberation Sans" fill="#333">{add ? '.00' : '.0'}</text>
    <path d={add ? 'M8 4H2M4 2L2 4l2 2' : 'M1 12h6M5 10l2 2-2 2'} fill="none" stroke="#2f6cb8" strokeWidth="1.4" />
  </S>
);
const IcoFill = () => (
  <S w={16} h={18}><path d="M7 1l6 6-5 5-5-5z" fill="#fff" stroke="#5d6670" /><path d="M3 7h9l-4 5z" fill="#7fa8d8" /><path d="M13 8c1 2 2 3 1 4s-2-1-1-4z" fill="#5d7fb0" /><rect x="0" y="14" width="16" height="4" fill="#ffee12" /></S>
);
const IcoFontColor = () => (
  <S w={16} h={18}><text x="8" y="12.5" fontFamily="Liberation Sans" fontWeight="700" fontSize="15" textAnchor="middle" fill="#2f4f8f">A</text><rect x="0" y="14" width="16" height="4" fill="#e5000f" /></S>
);
const IcoBorder = () => (
  <S w={14} h={14}><rect x=".5" y=".5" width="13" height="11" fill="none" stroke="#9a9ea3" strokeDasharray="1 1" /><path d="M7 1v11M1 6h12" stroke="#9a9ea3" strokeDasharray="1 1" /><path d="M0 13.5h14" stroke="#222" /></S>
);
const IcoPhonetic = () => (
  <S w={17} h={18}><text x="8.5" y="6.5" fontSize="7" fontWeight="700" textAnchor="middle" fontFamily="Liberation Sans" fill="#333">wén</text><text x="8.5" y="17" fontSize="11" textAnchor="middle" fontFamily="Noto Sans CJK SC" fill="#2b4f94">文</text></S>
);
const IcoCond = () => (
  <S w={34} h={32}>
    <g stroke="#a9b2bc" fill="#fff"><rect x="2" y="1" width="8" height="6" /><rect x="10" y="1" width="8" height="6" fill="#ee6d5f" /><rect x="18" y="1" width="8" height="6" /><rect x="2" y="7" width="8" height="6" /><rect x="10" y="7" width="8" height="6" fill="#4f86d8" /><rect x="18" y="7" width="8" height="6" fill="#4f86d8" /><rect x="2" y="13" width="8" height="6" /><rect x="10" y="13" width="8" height="6" fill="#ee6d5f" /><rect x="18" y="13" width="8" height="6" fill="#ee6d5f" /><rect x="2" y="19" width="8" height="6" /><rect x="10" y="19" width="8" height="6" fill="#4f86d8" /><rect x="18" y="19" width="8" height="6" /></g>
    <rect x="19" y="16" width="14" height="14" rx="1" fill="#f2f4f6" stroke="#5b6068" /><path d="M22 20h8M22 23h8M22 26h8" stroke="#333" /><path d="M27 19l-3 4h5l-3 4" fill="none" stroke="#333" />
  </S>
);
const IcoTable = () => (
  <S w={32} h={32}>
    <g stroke="#97a8bd" fill="#d4e0f0"><rect x="1" y="1" width="8" height="6" /><rect x="9" y="1" width="8" height="6" /><rect x="17" y="1" width="8" height="6" /><rect x="1" y="7" width="8" height="6" fill="#a8c4e8" /><rect x="9" y="7" width="8" height="6" fill="#a8c4e8" /><rect x="17" y="7" width="8" height="6" fill="#a8c4e8" /><rect x="1" y="13" width="8" height="6" /><rect x="9" y="13" width="8" height="6" /><rect x="17" y="13" width="8" height="6" /><rect x="1" y="19" width="8" height="6" fill="#a8c4e8" /><rect x="9" y="19" width="8" height="6" fill="#a8c4e8" /></g>
    <path d="M29 5l-13 18 3 2L31 7z" fill="#9a8f7d" stroke="#6a604f" strokeWidth=".5" />
    <path d="M16 22c-3 1-4 4-6 8 4 0 8-1 9-5z" fill="#3d74c4" />
  </S>
);
const Grid3 = ({ x, y }: { x: number; y: number }) => (
  <g fill="#fff" stroke="#7f8a96"><rect x={x} y={y} width="7" height="5" /><rect x={x + 7} y={y} width="7" height="5" /><rect x={x} y={y + 5} width="7" height="5" /><rect x={x + 7} y={y + 5} width="7" height="5" /></g>
);
const IcoInsert = () => (
  <S w={32} h={30}>
    <rect x="1" y="1" width="13" height="5" fill="#fff" stroke="#7f8a96" />
    <rect x="14" y="10" width="8" height="8" fill="#6d9fe2" stroke="#4a73ae" /><rect x="22" y="10" width="8" height="8" fill="#6d9fe2" stroke="#4a73ae" />
    <path d="M12 14H5M8 11l-3 3 3 3" fill="none" stroke="#333" />
    <Grid3 x={1} y={19} />
  </S>
);
const IcoDelete = () => (
  <S w={26} h={30}>
    <rect x="1" y="1" width="13" height="5" fill="#fff" stroke="#7f8a96" />
    <rect x="6" y="9" width="10" height="9" fill="#fff" stroke="#8a8f96" strokeDasharray="1 1" />
    <path d="M14 8l10 11M24 8L14 19" stroke="#e24c3a" strokeWidth="2.2" />
    <Grid3 x={1} y={19} />
  </S>
);
const IcoFormatCells = () => (
  <S w={30} h={32}>
    <path d="M2 2h26M6 1v3M24 1v3" stroke="#555" />
    <g fill="#eef1f5" stroke="#8e98a3"><rect x="2" y="6" width="8" height="8" /><rect x="10" y="6" width="10" height="8" /><rect x="20" y="6" width="8" height="8" /><rect x="2" y="14" width="8" height="10" /><rect x="20" y="14" width="8" height="10" /><rect x="2" y="24" width="8" height="6" rx="2" /><rect x="10" y="24" width="10" height="6" rx="2" /><rect x="20" y="24" width="8" height="6" /></g>
    <rect x="10" y="14" width="10" height="10" fill="#6d9fe2" stroke="#4a73ae" />
  </S>
);
const IcoFillDown = () => (
  <S w={14} h={16}><rect x=".5" y=".5" width="13" height="15" fill="#eaf1fa" stroke="#5f82ad" /><rect x=".5" y=".5" width="13" height="3" fill="#5f82ad" /><path d="M5 5h4v4h2l-4 4-4-4h2z" fill="#2f6cc8" /></S>
);
const IcoEraser = () => (
  <S w={16} h={14}><path d="M4 12L1 9l8-8 6 4-8 7z" fill="#e8edf3" stroke="#7a828b" /><path d="M0 13.5h12" stroke="#444" /></S>
);
const IcoSort = () => (
  <S w={32} h={32}>
    <text x="8" y="12" fontSize="14" fontWeight="700" textAnchor="middle" fill="#2e5fa8" fontFamily="Liberation Serif">A</text>
    <text x="8" y="28" fontSize="14" fontWeight="700" textAnchor="middle" fill="#a83a30" fontFamily="Liberation Serif">Z</text>
    <path d="M10 5h21l-8 11v13l-4-3V16z" fill="#aeb4bb" stroke="#6d7379" strokeWidth=".6" />
  </S>
);
const IcoFind = () => (
  <S w={30} h={30}>
    <path d="M9 2h4v6h4V2h4v6l3 2 4 16H16V12h-2v14H2l4-16 3-2z" fill="#4f78b4" stroke="#2e4a7a" strokeWidth=".8" />
    <path d="M5 16h8v8H4zM18 16h8l1 8h-9z" fill="#7ea6dc" />
  </S>
);
const IcoOrb = () => (
  <svg width="38" height="38" viewBox="0 0 38 38">
    <defs><radialGradient id="orbG" cx="50%" cy="30%" r="70%"><stop offset="0" stopColor="#86c6f0" /><stop offset="1" stopColor="#1e5a95" /></radialGradient></defs>
    <circle cx="19" cy="19" r="18" fill="url(#orbG)" stroke="#d6e4ee" strokeOpacity=".6" />
    <path d="M9 12c3-2 6-1 9 0l-1 7c-3-1-6-2-10-1z" fill="#ef5a2a" /><path d="M20 12c3 1 6 2 9 0l-2 7c-3 1-6 0-9 0z" fill="#7fc241" />
    <path d="M7 20c3-1 7 0 10 1l-1 7c-3-1-7-2-11-1z" fill="#4aa3e2" /><path d="M18 21c3 1 6 1 9-1l-2 7c-3 2-6 1-9 1z" fill="#f4c32f" />
  </svg>
);
const IcoChrome = () => (
  <S w={32} h={32}>
    <path d="M16 16L3 8.5A15 15 0 0129 8.5z" fill="#dd4b3e" /><path d="M16 16L29 8.5A15 15 0 0116 31z" fill="#f2c530" /><path d="M16 16L16 31A15 15 0 013 8.5z" fill="#3ba55d" />
    <circle cx="16" cy="16" r="7.5" fill="#fff" /><circle cx="16" cy="16" r="5.5" fill="#4a8ae0" />
  </S>
);
const BaiduTile = styled.div`
  width: 33px; height: 32px; background: #fff; border-radius: 6px; display: flex; align-items: center; justify-content: center;
`;
const IcoDb = () => (
  <S w={30} h={34}>
    <path d="M8 5c0-5 20-5 20 0v22c0 5-20 5-20 0z" fill="#b8417a" stroke="#7a2453" />
    <ellipse cx="18" cy="5" rx="10" ry="3.5" fill="#d9699e" /><path d="M8 13c3 3 17 3 20 0M8 20c3 3 17 3 20 0" fill="none" stroke="#7a2453" />
    <circle cx="8" cy="25" r="6.5" fill="#9ba2a8" stroke="#555" strokeDasharray="2 1.2" strokeWidth="2" /><circle cx="8" cy="25" r="2.4" fill="#e5e8ea" />
  </S>
);
const IcoFolder = () => (
  <S w={24} h={32}>
    <path d="M3 4l14-3v26L3 31z" fill="#e4c877" stroke="#b4954a" strokeWidth=".6" /><path d="M9 6h13v24H9z" fill="#f4de9d" /><path d="M3 4h6v27H3z" fill="#d9b862" />
  </S>
);
const IcoTerminal = () => (
  <S w={32} h={32}>
    <rect x="1" y="1" width="30" height="22" fill="#1f2429" stroke="#565c62" />
    <path d="M4 5l4 3-4 3M9 12h5" fill="none" stroke="#e7ecef" />
    <path d="M12 22l6-8 6 6-6 8z" fill="#e74d34" /><path d="M18 14l6-6 7 6-7 6z" fill="#4f86dc" /><path d="M18 28l6-8 7 5-8 7z" fill="#6fb53f" /><path d="M8 24l6-6 4 6-5 5z" fill="#efc12c" />
  </S>
);
const IcoNavicat = () => (
  <S w={34} h={36}>
    <path d="M8 26C3 14 10 2 18 3c7 1 7 10 2 12-4 2-7 0-6-4" fill="none" stroke="#bfe3ff" strokeWidth="3.4" />
    <path d="M16 18c8-2 14 4 12 10-2 6-10 6-13 3" fill="none" stroke="#f1c24b" strokeWidth="3.4" />
    <path d="M8 26c2 4 5 6 8 5" fill="none" stroke="#6fb0e6" strokeWidth="3.4" />
  </S>
);
const IcoImport = () => (
  <S w={32} h={34}>
    <rect x="1" y="1" width="30" height="26" rx="2" fill="#3b84d6" />
    <path d="M1 9h30M1 18h30M11 1v26M21 1v26" stroke="#fff" strokeWidth="1.6" />
    <path d="M14 24l8-7v4c6 0 9 4 9 12-2-5-4-6-9-6v4z" fill="#53b847" />
  </S>
);
const IcoXlDoc = () => (
  <S w={32} h={34}>
    <path d="M7 2h17l6 6v25H7z" fill="#f4f7fa" stroke="#8d98a3" /><g stroke="#9fb4cb"><path d="M12 15h14M12 20h14M12 25h14M16 11v17M21 11v17" /></g>
    <rect x="1" y="2" width="15" height="15" fill="#2d8a3d" stroke="#19602a" /><path d="M5 5l7 9M12 5l-7 9" stroke="#fff" strokeWidth="2" />
  </S>
);
const IcoDlg = () => (
  <S w={18} h={18}>
    <rect x="1" y="1" width="13" height="13" fill="#fff" stroke="#3f86c7" /><rect x="1" y="1" width="13" height="4" fill="#3f86c7" />
    <path d="M5 5v9M10 5v9M1 9h13" stroke="#3f86c7" /><path d="M8 14l4-4v2c3 0 5 1 5 5-1-2-3-2-5-2v2z" fill="#4bab3c" />
  </S>
);

/* tray glyphs */
const BaiduTile3 = styled.div`
  width: 16px; height: 20px; background: #fff; border-radius: 3px; display: flex; align-items: center; justify-content: center;
`;
const T = {
  kb: <S w={14} h={12}><rect x=".5" y=".5" width="13" height="11" rx="1.5" fill="#b9c2cc" stroke="#6b7682" /><path d="M2 4h10M2 6.5h10M4 9h6" stroke="#6b7682" strokeDasharray="1 1" /></S>,
  q: <S w={16} h={18}><ellipse cx="8" cy="9" rx="7" ry="8.5" fill="#3353b0" stroke="#e7ecf5" /><text x="8" y="13" fontSize="11" fontWeight="700" textAnchor="middle" fill="#fff" fontFamily="Liberation Sans">?</text></S>,
  usb: <S w={12} h={22}><rect x="2.5" y="1" width="7" height="6" fill="#d8dde2" stroke="#333" /><rect x="1" y="7" width="10" height="14" fill="#7fc14a" stroke="#2a5a1c" /><path d="M6 10v8M4 12l2-2 2 2" stroke="#fff" fill="none" /></S>,
  fan: <FanMark size={18} c="#8cc63f" />,
  bd: <BaiduTile3><BaiduMark size={14} a="#36a7ee" b="#e9527e" c="#3870e0" sw={3.2} /></BaiduTile3>,
  xl: <S w={16} h={22}><g fill="none" stroke="#34c94f" strokeWidth="2.6"><path d="M4 4l8 8M12 4L8 11M6 14l-2 5M12 12l0 7" /></g><circle cx="4" cy="4" r="2.4" fill="#34c94f" /><circle cx="12" cy="4" r="2.4" fill="#34c94f" /><circle cx="12" cy="19" r="2.4" fill="#34c94f" /></S>,
  hand: <S w={18} h={18}><path d="M9 1h8v7h-6v5H5v4l-4-1V8h8z" fill="#1287e6" /></S>,
  or: <S w={16} h={22}><rect x="1" y="1" width="14" height="20" rx="2" fill="#f2531e" /><path d="M4 4v13l8-7z" fill="#fff" /></S>,
  pw: <S w={16} h={20}><rect x="5" y="1" width="6" height="9" fill="#9aa3ac" stroke="#444" /><path d="M3 9h10v4H3z" fill="#505860" /><circle cx="10" cy="13" r="5.5" fill="#55a53a" /><path d="M7.5 13l2 2 3-4" stroke="#fff" fill="none" /></S>,
  sp: <S w={18} h={18}><path d="M1 6h4l6-5v16l-6-5H1z" fill="#d08a5a" stroke="#7c5432" /><path d="M13 5c2 2 2 6 0 8M15 3c3 3 3 9 0 12" fill="none" stroke="#e2ddd5" /></S>,
  pl: <S w={18} h={18}><circle cx="9" cy="9" r="8" fill="#e9c41f" stroke="#3b7b2a" strokeWidth="1.6" /><path d="M9 4v10M4 9h10" stroke="#20621a" strokeWidth="2.6" /></S>,
  bl: <S w={17} h={22}><rect x=".5" y=".5" width="16" height="21" rx="2" fill="#2f7fd0" stroke="#e8c93a" /><rect x="3" y="4" width="11" height="9" fill="#e8f2fa" /><path d="M4 16h9M4 18.5h9" stroke="#e8f2fa" /></S>,
  sound: <S w={12} h={18}><path d="M1 6h3l6-5v16l-6-5H1z" fill="#d9dfe5" stroke="#6b7682" /></S>,
  net: <S w={18} h={14}><path d="M2 11h2v3H2zM6 8h2v6H6zM10 5h2v9h-2zM14 1h2v13h-2z" fill="#e7ecf1" stroke="#5e6a76" strokeWidth=".5" /></S>,
};

/* ---------- data ---------- */
const HEAD = ['USERNAME', 'YLFKPS', 'JKKH', 'ZYCS', 'BAH', 'XM', 'XB', 'CSRQ', 'NL', 'GJ', 'BZYZSNL', 'XSECSTZ', 'XSERYTZ', 'CSD', 'GG', 'MZ', 'SFZH', 'ZY', 'HY', 'XZZ', 'DH', 'YB1', 'HKDZ'];
const LETTERS = 'ABCDEFGHIJKLMNOPQRSTUV'.split('');
const RIGHT: [string, string, string, string, string, string?][] = [
  ['', '27', '20', '  辽宁 朝阳 建平小塘镇新城村', '15542100528'],
  ['211322196907262271', '27', '20', '辽宁朝阳建平张家营子镇七家村', '13842117475', '122400'],
  ['211322195503210761', '27', '20', '辽宁朝阳建平', '15566617715'],
  ['211322198707302274', '27', '20', '辽宁朝阳建平', '17704278186'],
  ['', '90', '20', '', '13942122782'],
  ['', '27', '10', '  辽宁 朝阳 建平万寿街道西村', '13464266343'],
  ['211322200405227272', '31', '10', '辽宁朝阳建平', '15184214411'],
  ['211322195603152263', '27', '20', '辽宁朝阳建平张家营子勿心吐鲁村', '15042157323', '122400'],
  ['211322198710201271', '27', '10', '辽宁朝阳建平', '15524937985'],
  ['211322197003037295', '27', '20', '辽宁朝阳建平白山乡东城村', '15942135916', '122400'],
  ['', '27', '20', '  辽宁   朝阳 建平奎德素镇', '15724328482'],
  ['', '27', '20', '辽宁朝阳建平', '15242190760'],
  ['', '27', '20', '  辽宁   朝阳 建平小塘镇茶台沟村', '13470265282'],
  ['211322197312210792', '27', '20', '辽宁朝阳建平万寿街道大板沟村', '15524924798', '122400'],
  ['', '27', '20', '  辽宁 朝阳 建平万寿街道', '13942122681'],
  ['', '27', '20', '  辽宁 朝阳 建平奎德素镇红山村', '13464215522'],
  ['211322195110041522', '27', '20', '辽宁朝阳建平沙海镇大苏子沟村', '13238905558', '122400'],
  ['211322198502051555', '27', '20', '辽宁朝阳建平三家乡南四家村', '18940505656', '122400'],
  ['', '27', '20', '  辽宁 朝阳 建平白山乡旦洲城村', '17072434116'],
  ['211322199403017014', '27', '10', '辽宁朝阳建平榆树林子镇中官村西塘', '15042112928', '122400'],
  ['211322195506061319', '27', '20', '辽宁朝阳建平青峰山乡兴隆地村', '17696649138', '122400'],
  ['21132219680723277X', '27', '20', '辽宁朝阳建平奎德素镇奎德素村', '13591885699', '122400'],
  ['', '27', '20', '  辽宁 朝阳 建平富山街道', '18030155033'],
  ['21132219530624652X', '27', '20', '辽宁朝阳建平', '15040851425'],
  ['211322193312073021', '27', '20', '辽宁朝阳建平', '15084220216', '122400'],
  ['21132220080628127X', '31', '10', ' 辽宁 朝阳 建平青峰山镇', '13134212115'],
  ['', '27', '20', '  辽宁 朝阳 建平建平镇黄河街', '13704917166'],
  ['211322199412258012', '27', '10', '辽宁朝阳建平太平庄乡和乐村', '15804961035', '122400'],
  ['211322193706114519', '27', '20', '辽宁朝阳建平建平镇东张营子村', '18342124192'],
  ['', '27', '20', '  辽宁   朝阳 建平榆树林子镇', '15184237445'],
  ['211322196504168010', '27', '20', '辽宁朝阳建平', '18204249927'],
  ['211322196811170786', '27', '20', '辽宁朝阳建平', '13204213601'],
  ['', '27', '20', '  辽宁 朝阳 建平沙海镇马杖子村', '13470242263'],
  ['211322197705027534', '27', '20', '辽宁朝阳建平', '18340585788'],
  ['211322193312073021', '90', '20', '辽宁朝阳建平老官地镇上地村', '15840222016'],
  ['211322196001098014', '27', '20', '辽宁朝阳建平太平庄乡要道吐村', '18204227007', '122400'],
];
const MID: Record<number, string[]> = {
  2: ['18120030', '徐磊', '1', '19841220', '34', ' 辽宁 朝阳 建平', ' 辽宁  朝阳'],
  3: ['18120045', '孟凡伟', '1', '19681230', '50', '辽宁朝阳建平', '辽宁朝阳'],
  34: ['19020022', '朱凤芝', '2', '19640227', '55', ' 辽宁 朝阳 建平', '  辽宁   朝阳'],
  35: ['19020019', '郭勇刚', '1', '19770225', '42', '辽宁朝阳建平', '辽宁朝阳'],
  36: ['19020013', '姜桂荣', '2', '19340222', '85', '辽宁朝阳建平', '辽宁朝阳'],
  37: ['19030003', '郭树民', '1', '19580304', '61', '辽宁朝阳建平', '辽宁朝阳'],
};

const isAscii = (s: string) => /^[\x00-\x7f]*$/.test(s);

function buildRow(r: number): { t: string; tri: boolean; right?: boolean }[] {
  const [q, zy, hy, xzz, dh, yb] = RIGHT[r - 2];
  const m = MID[r];
  const lead = (xzz.match(/^ */) || [''])[0];
  const w = xzz ? lead + '辽宁' : '';
  return [
    { t: '建平骨科医院', tri: false },
    { t: '2', tri: true },
    { t: '', tri: false },
    { t: '1', tri: true },
    { t: m ? m[0] : '', tri: true },
    { t: m ? m[1] : '', tri: false },
    { t: m ? m[2] : '', tri: !!m },
    { t: m ? m[3] : '', tri: !!m },
    { t: m ? m[4] : '', tri: false, right: true },
    { t: m ? 'CHN' : '', tri: false },
    { t: m ? '-' : '', tri: false },
    { t: '', tri: false },
    { t: '', tri: false },
    { t: m ? m[5] : '', tri: false },
    { t: m ? m[6] : '', tri: false },
    { t: m ? '01' : '', tri: !!m },
    { t: q, tri: !!q },
    { t: zy, tri: true },
    { t: hy, tri: true },
    { t: xzz, tri: false },
    { t: dh, tri: true },
    { t: yb || '', tri: !!yb },
    { t: w, tri: false },
  ];
}

function arrow(tx: number, ty: number, hx: number, hy: number, hl: number, hw: number, neck: number, tail: number) {
  const dx = hx - tx, dy = hy - ty, L = Math.hypot(dx, dy), ux = dx / L, uy = dy / L, nx = -uy, ny = ux;
  const bx = hx - ux * hl, by = hy - uy * hl;
  const P = (x: number, y: number) => `${x.toFixed(1)},${y.toFixed(1)}`;
  return [
    P(tx + nx * tail / 2, ty + ny * tail / 2), P(bx + nx * neck / 2, by + ny * neck / 2), P(bx + nx * hw / 2, by + ny * hw / 2),
    P(hx, hy),
    P(bx - nx * hw / 2, by - ny * hw / 2), P(bx - nx * neck / 2, by - ny * neck / 2), P(tx - nx * tail / 2, ty - ny * tail / 2),
  ].join(' ');
}
const ARROWS = [
  arrow(451, 447.7, 19, 282.7, 16, 11, 5, .6),
  arrow(456, 476.7, 19, 299, 16, 11, 5, .6),
  arrow(581, 505.8, 502, 508.5, 9, 9, 3, .5),
  arrow(682, 588.6, 531, 560.5, 11, 11, 4.5, .5),
  arrow(641, 624, 528.6, 588.6, 11, 11, 4.5, .5),
  arrow(823.4, 761.5, 801.8, 797, 11, 8, 2.5, .5),
];

export default function App() {
  const rows = Array.from({ length: 36 }, (_, i) => i + 2);
  return (
    <Page>
      <Global />
      <TitleBar>
        <AppLogo><FanMark size={15} /></AppLogo>
        <TitleText>PC-20190101Qqaz</TitleText>
        <WinControls>
          <WinCtl $w={58}><S w={14} h={2}><rect width="12" height="1" fill="#9a9a9a" /></S></WinCtl>
          <WinCtl $w={59}><S w={14} h={14}><rect x=".5" y=".5" width="12" height="12" fill="none" stroke="#8a8a8a" /></S></WinCtl>
          <WinCtl $w={61}><XMark c="#8a8a8a" /></WinCtl>
        </WinControls>
      </TitleBar>

      <NavyBar>
        <ToolBtn><IcoRemoteOff /></ToolBtn>
        <ToolSep />
        <ToolBtn><IcoTransfer /></ToolBtn>
        <ToolBtn $corner><IcoScreenOne /></ToolBtn>
        <ToolBtn $corner><IcoEye /></ToolBtn>
        <ToolBtn><IcoExpand /></ToolBtn>
        <ToolSep />
        <ToolBtn><IcoDrives /></ToolBtn>
        <ToolBtn><IcoRing /></ToolBtn>
        <ToolBtn><IcoFileSwap /></ToolBtn>
        <ToolBtn $corner><IcoTree /></ToolBtn>
        <ChatBox>
          <IcoChat />
          <ChatHint>在这里输入消息</ChatHint>
        </ChatBox>
      </NavyBar>

      <QatRow>
        <QatItem $w={16}><IcoXlQat /></QatItem>
        <QatSep $ml={4} />
        <QatItem $w={15} $ml={7}><IcoSave /></QatItem>
        <QatItem $w={14} $ml={8}><IcoUndo /></QatItem>
        <QatItem $w={8} $ml={4}><Caret /></QatItem>
        <QatItem $w={14} $ml={8}><IcoRedo /></QatItem>
        <QatItem $w={8} $ml={4}><Caret /></QatItem>
        <QatItem $w={16} $ml={6}><IcoPreview /></QatItem>
        <QatSep $ml={5} />
        <QatItem $w={8} $ml={4}><IcoCustom /></QatItem>
        <DocTitle>建平骨科医院19-21医保及农合病人信息.xlsx [兼容模式] - Microsoft Excel(产品激活失败)</DocTitle>
        <WinControls>
          <WinCtl $w={35}><MiniMin /></WinCtl>
          <WinCtl $w={35}><MiniRestore /></WinCtl>
          <WinCtl $w={36}><MiniClose /></WinCtl>
        </WinControls>
      </QatRow>

      <TabRow>
        <FileTab>文件</FileTab>
        <HomeTab>开始</HomeTab>
        {['插入', '页面布局', '公式', '数据', '审阅', '视图', '开发工具'].map(t => <TabItem key={t}>{t}</TabItem>)}
        <RightCluster>
          <UploadPill>
            <UploadLogo><BaiduMark size={20} /></UploadLogo>
            <UploadText>拖拽上传</UploadText>
          </UploadPill>
          <HelpSlot $w={18}><S w={9} h={8}><path d="M4.5 1L8 7H1z" fill="none" stroke="#555" /></S></HelpSlot>
          <HelpSlot $w={26}><S w={17} h={19}><ellipse cx="8.5" cy="9.5" rx="8" ry="9" fill="#3f7fd6" /><text x="8.5" y="14" fontSize="13" fontWeight="700" textAnchor="middle" fill="#fff" fontFamily="Liberation Sans">?</text></S></HelpSlot>
          <HelpSlot $w={22}><MiniMin /></HelpSlot>
          <HelpSlot $w={22}><MiniRestore /></HelpSlot>
          <HelpSlot $w={21}><MiniClose /></HelpSlot>
        </RightCluster>
      </TabRow>

      <Ribbon>
        <Group $w={112}>
          <GroupBody>
            <BigBtn $w={30} $ml={10}>
              <BigIcon><IcoPaste /></BigIcon>
              <BigLabel>粘贴</BigLabel>
              <BigCaret><Caret /></BigCaret>
            </BigBtn>
            <SmallCol $ml={10} $pt={3}>
              <SmallRow $h={25}><RowIcon $w={15} $mr={4}><IcoScissors /></RowIcon>剪切</SmallRow>
              <SmallRow $h={25}><RowIcon $w={15} $mr={4}><IcoCopy /></RowIcon>复制<Caret $ml={5} /></SmallRow>
              <SmallRow $h={25}><RowIcon $w={15} $mr={4}><IcoBrush /></RowIcon>格式刷</SmallRow>
            </SmallCol>
          </GroupBody>
          <GroupLabel $launch>剪贴板<Launcher /></GroupLabel>
        </Group>

        <Group $w={253}>
          <GroupBody $col $pad="12px 0 0 6px">
            <ComboRow>
              <ComboBox $w={151}>宋体<Caret /></ComboBox>
              <ComboBox $w={46} $ml={1}>9<Caret /></ComboBox>
              <Slot $w={22}><S w={18} h={16}><text x="7" y="14" fontSize="15" fontWeight="700" fontFamily="Liberation Serif" textAnchor="middle" fill="#222">A</text><path d="M14 5l2.5-3L19 5z" fill="#2f6cb8" /></S></Slot>
              <Slot $w={22}><S w={16} h={16}><text x="6" y="14" fontSize="12" fontWeight="700" fontFamily="Liberation Serif" textAnchor="middle" fill="#222">A</text><path d="M10 2h5l-2.5 3z" fill="#2f6cb8" /></S></Slot>
            </ComboRow>
            <ToolRow $mt={11}>
              <Slot $w={23} $on><SerifGlyph $size={14}>B</SerifGlyph></Slot>
              <Slot $w={22}><SerifGlyph $size={14} $i>I</SerifGlyph></Slot>
              <Slot $w={24}><SerifGlyph $size={13} $u>U</SerifGlyph></Slot>
              <Slot $w={8}><Caret /></Slot>
              <VSep $ml={7} />
              <Slot $w={16} $ml={8}><IcoBorder /></Slot>
              <Slot $w={10} $ml={4}><Caret /></Slot>
              <VSep $ml={6} />
              <Slot $w={16} $ml={7}><IcoFill /></Slot>
              <Slot $w={8} $ml={4}><Caret /></Slot>
              <Slot $w={16} $ml={5}><IcoFontColor /></Slot>
              <Slot $w={14}><Caret /></Slot>
              <VSep $ml={4} />
              <Slot $w={16} $ml={8}><IcoPhonetic /></Slot>
              <Slot $w={16}><Caret /></Slot>
            </ToolRow>
          </GroupBody>
          <GroupLabel $launch>字体<Launcher /></GroupLabel>
        </Group>

        <Group $w={238}>
          <GroupBody $pad="0 0 0 6px">
            <AlignCol>
              <ToolRow>
                <Slot $w={23}><Lines rows={AL_T} /></Slot>
                <Slot $w={23}><Lines rows={AL_M} /></Slot>
                <Slot $w={23} $on><Lines rows={AL_B} /></Slot>
                <Slot $w={23} $ml={10}><IcoOrient /></Slot>
                <Slot $w={8}><Caret /></Slot>
              </ToolRow>
              <ToolRow $mt={11}>
                <Slot $w={23}><Lines rows={AH_L} /></Slot>
                <Slot $w={23}><Lines rows={AH_C} /></Slot>
                <Slot $w={23}><Lines rows={AH_R} /></Slot>
                <VSep $ml={4} />
                <Slot $w={23} $ml={5}><IcoIndent /></Slot>
                <Slot $w={23}><IcoIndent flip /></Slot>
              </ToolRow>
            </AlignCol>
            <TallSep />
            <WrapCol>
              <SmallRow $h={22}><RowIcon $w={16} $mr={4}><IcoWrap /></RowIcon>自动换行</SmallRow>
              <SmallRow $h={22} $mt={11}><RowIcon $w={16} $mr={4}><IcoMerge /></RowIcon>合并后居中<Caret $ml={5} /></SmallRow>
            </WrapCol>
          </GroupBody>
          <GroupLabel $launch>对齐方式<Launcher /></GroupLabel>
        </Group>

        <Group $w={142}>
          <GroupBody $col $pad="12px 0 0 6px">
            <ComboBox $w={133}>文本<Caret /></ComboBox>
            <ToolRow $mt={11}>
              <Slot $w={24}><IcoCurrency /></Slot>
              <Slot $w={6}><Caret /></Slot>
              <Slot $w={24} $ml={4}>%</Slot>
              <Slot $w={22}><SerifGlyph $size={13}>,</SerifGlyph></Slot>
              <VSep $ml={4} />
              <Slot $w={22} $ml={4}><IcoDec add /></Slot>
              <Slot $w={23}><IcoDec /></Slot>
            </ToolRow>
          </GroupBody>
          <GroupLabel $launch>数字<Launcher /></GroupLabel>
        </Group>

        <Group $w={463}>
          <GroupBody>
            <BigBtn $w={60} $ml={1}>
              <BigIcon><IcoCond /></BigIcon>
              <BigLabel>条件格式</BigLabel>
              <BigCaret><Caret /></BigCaret>
            </BigBtn>
            <BigBtn $w={59}>
              <BigIcon><IcoTable /></BigIcon>
              <BigLabel>套用</BigLabel>
              <BigLabel>表格格式<Caret $ml={3} /></BigLabel>
            </BigBtn>
            <Gallery>
              <GalleryGrid>
                <StyleCell $bg="#fff" $fg="#111" $size={12} $sel>常规</StyleCell>
                <StyleCell $bg="#ffc7ce" $fg="#9c0006" $size={14}>差</StyleCell>
                <StyleCell $bg="#c6efce" $fg="#006100" $size={14}>好</StyleCell>
                <StyleCell $bg="#ffeb9c" $fg="#9c6500" $size={15}>适中</StyleCell>
                <StyleCell $bg="#f2f2f2" $fg="#fa7d00" $size={15} $bold $bd="1px solid #7f7f7f">计算</StyleCell>
                <StyleCell $bg="#a5a5a5" $fg="#fff" $size={16} $bold $bd="2px solid #444">检查单元格</StyleCell>
              </GalleryGrid>
              <GalleryScroll>
                <GalleryStep><Tri $dir="u" $s={3} $c="#b9bcc0" /></GalleryStep>
                <GalleryStep><Tri $dir="d" $s={3} $c="#555" /></GalleryStep>
                <GalleryStep><Tri $dir="d" $s={3} $c="#555" /></GalleryStep>
              </GalleryScroll>
            </Gallery>
          </GroupBody>
          <GroupLabel>样式</GroupLabel>
        </Group>

        <Group $w={136}>
          <GroupBody $pad="0 0 0 5px">
            {([['插入', <IcoInsert key="a" />], ['删除', <IcoDelete key="b" />], ['格式', <IcoFormatCells key="c" />]] as [string, React.ReactNode][]).map(([l, ic]) => (
              <BigBtn $w={42} key={l}>
                <BigIcon>{ic}</BigIcon>
                <BigLabel>{l}</BigLabel>
                <BigCaret><Caret /></BigCaret>
              </BigBtn>
            ))}
          </GroupBody>
          <GroupLabel>单元格</GroupLabel>
        </Group>

        <Group $w={222}>
          <GroupBody>
            <SmallCol $ml={8} $pt={1}>
              <SmallRow $h={22}><RowIcon $w={15} $mr={3}><SigmaGlyph>Σ</SigmaGlyph></RowIcon>自动求和<Caret $ml={5} /></SmallRow>
              <SmallRow $h={22}><RowIcon $w={15} $mr={3}><IcoFillDown /></RowIcon>填充<Caret $ml={5} /></SmallRow>
              <SmallRow $h={22}><RowIcon $w={15} $mr={3}><IcoEraser /></RowIcon>清除<Caret $ml={5} /></SmallRow>
            </SmallCol>
            <BigBtn $w={65} $auto>
              <BigIcon><IcoSort /></BigIcon>
              <BigLabel>排序和筛选</BigLabel>
              <BigCaret><Caret /></BigCaret>
            </BigBtn>
            <BigBtn $w={65} $mr={4}>
              <BigIcon><IcoFind /></BigIcon>
              <BigLabel>查找和选择</BigLabel>
              <BigCaret><Caret /></BigCaret>
            </BigBtn>
          </GroupBody>
          <GroupLabel>编辑</GroupLabel>
        </Group>
      </Ribbon>

      <FormulaStrip />
      <FormulaBar>
        <NameBox>A1<NameCaret /></NameBox>
        <FxSlot><FxText>fx</FxText></FxSlot>
        <FormulaText>USERNAME</FormulaText>
        <FormulaEnd><ChevronDown size={12} color="#555" /></FormulaEnd>
      </FormulaBar>
      <GapStrip />

      <SheetArea>
        <GridViewport>
          <GridTable>
            <Corner />
            {LETTERS.map(l => <ColHead key={l}>{l}</ColHead>)}
            <ColHead />
            <RowHead>1</RowHead>
            {HEAD.map(h => <Cell $kind="head" key={h}>{h}</Cell>)}
            {rows.map(r => (
              <React.Fragment key={r}>
                <RowHead>{r}</RowHead>
                {buildRow(r).map((c, i) => (
                  <Cell key={i} $kind={isAscii(c.t.replace(/ /g, '')) ? 'num' : 'cjk'} $tri={c.tri} $right={c.right}>{c.t}</Cell>
                ))}
              </React.Fragment>
            ))}
          </GridTable>
        </GridViewport>
        <VScroll>
          <SplitBtn />
          <ArrowBox><Tri $dir="u" /></ArrowBox>
          <VThumb><GripLines /></VThumb>
          <VSpacer />
          <ArrowBox><Tri $dir="d" /></ArrowBox>
          <LevelPill />
        </VScroll>
      </SheetArea>

      <SheetTabsBar>
        <TabNav><Tri $dir="l" $s={4} /><Tri $dir="l" $s={4} /><Tri $dir="r" $s={4} /><Tri $dir="r" $s={4} /></TabNav>
        <SheetTab $active>SQL Results</SheetTab>
        <SheetTab>SQL Statement</SheetTab>
        <NewSheet><S w={13} h={12}><rect x="2" y="2" width="9" height="9" fill="#fff" stroke="#6c8fb5" /><circle cx="3" cy="3" r="2" fill="#e8b93a" /></S></NewSheet>
        <TabSpacer />
        <HScroll>
          <HSplit />
          <Tri $dir="l" $ml={8} />
          <HThumb><HGrip /></HThumb>
          <VSpacer />
          <Tri $dir="r" />
          <HSplit $ml={6} />
        </HScroll>
      </SheetTabsBar>

      <StatusBar>
        <StatusReady>就绪</StatusReady>
        <StatusCount>计数: 879</StatusCount>
        <ViewBtn $w={19} $on><S w={13} h={13}><path d="M.5.5h12v12H.5zM.5 4.5h12M.5 8.5h12M4.5.5v12M8.5.5v12" fill="#fff" stroke="#666" /></S></ViewBtn>
        <ViewBtn $w={20}><S w={13} h={13}><rect x=".5" y=".5" width="12" height="12" fill="#fff" stroke="#777" /><path d="M3 3h7v7H3z" fill="#d5d8dc" stroke="#999" /></S></ViewBtn>
        <ViewBtn $w={19}><S w={13} h={13}><path d="M.5.5h12v12H.5zM6.5.5v9M.5 9.5h12" fill="#fff" stroke="#777" /></S></ViewBtn>
        <ZoomPct>100%</ZoomPct>
        <ZoomCircle>−</ZoomCircle>
        <ZoomTrack><ZoomThumb /></ZoomTrack>
        <ZoomCircle>+</ZoomCircle>
      </StatusBar>

      <Taskbar>
        <OrbSlot><IcoOrb /></OrbSlot>
        <TaskBtn $w={110}><IcoChrome /><TaskLabel>银海DIP...</TaskLabel></TaskBtn>
        <PlainIcon><BaiduTile><BaiduMark size={24} a="#35a8ee" b="#e9527e" c="#3870e0" /></BaiduTile></PlainIcon>
        <TaskBtn $w={110}><IcoDb /><TaskLabel>drgsplat...</TaskLabel></TaskBtn>
        <TaskGroup $w={221} $ml={4}>
          <TaskSeg $w={110}><IcoFolder /><TaskLabel>D:\朝阳\...</TaskLabel></TaskSeg>
          <TaskSeg $w={110}><IcoFolder /><TaskLabel>D:\softw...</TaskLabel></TaskSeg>
        </TaskGroup>
        <TaskBtn $w={111} $ml={3}><IcoTerminal /><TaskLabel>10.45.31...</TaskLabel></TaskBtn>
        <TaskBtn $w={111} $ml={3} $active><IcoNavicat /><TaskLabel>Navicat ...</TaskLabel></TaskBtn>
        <TaskBtn $w={108} $ml={2}><IcoImport /><TaskLabel>导入向导</TaskLabel></TaskBtn>
        <TaskGroup $w={222} $ml={3}>
          <TaskSeg $w={111}><IcoXlDoc /><TaskLabel>已导入.xlsx</TaskLabel></TaskSeg>
          <TaskSeg $w={110}><IcoXlDoc /><TaskLabel>建平骨科...</TaskLabel></TaskSeg>
        </TaskGroup>
        <Tray>
          <TraySlot>{T.kb}</TraySlot>
          <TraySlot>{T.q}</TraySlot>
          <TraySlot><TrayStack><S w={9} h={8}><rect x=".5" y="2.5" width="5" height="5" fill="none" stroke="#e5ebf0" /><rect x="3.5" y=".5" width="5" height="5" fill="#7f90a5" stroke="#e5ebf0" /></S><Tri $dir="d" $s={3} $c="#e5ebf0" /></TrayStack></TraySlot>
          <TraySlot>{T.usb}</TraySlot>
          <TraySlot $ml={7}>{T.fan}</TraySlot>
          <TraySlot>{T.bd}</TraySlot>
          <TraySlot>{T.xl}</TraySlot>
          <TraySlot>{T.hand}</TraySlot>
          <TraySlot>{T.or}</TraySlot>
          <TraySlot>{T.pw}</TraySlot>
          <TraySlot>{T.sp}</TraySlot>
          <TraySlot>{T.pl}</TraySlot>
          <TraySlot>{T.bl}</TraySlot>
          <TraySlot>{T.sound}</TraySlot>
          <TraySlot>{T.net}</TraySlot>
          <Clock>10:46<br />2022/4/14</Clock>
          <ShowDesk />
        </Tray>
      </Taskbar>

      <Toast>
        <ChevronDown size={14} color="#fff" />
        <ToastFan><FanMark size={18} /></ToastFan>
        <ToastText>(Trial user) Session in progress</ToastText>
      </Toast>

      <Tip>Navicat Premium</Tip>

      <Dialog>
        <DlgTitle>
          <IcoDlg />
          <DlgTitleText>导入向导</DlgTitleText>
          <DlgWinBtns>
            <DlgWinBtn><S w={12} h={8}><rect x="1" y="3" width="10" height="4" fill="#f2f5f8" stroke="#46586b" /></S></DlgWinBtn>
            <DlgWinBtn><S w={10} h={10}><rect x="1" y="1" width="8" height="8" fill="#f2f5f8" stroke="#46586b" /><rect x="3" y="3" width="4" height="4" fill="#b5c9dc" /></S></DlgWinBtn>
            <DlgWinBtn $close><S w={12} h={10}><path d="M2 1l8 8M10 1L2 9" stroke="#fff" strokeWidth="2.6" /></S></DlgWinBtn>
          </DlgWinBtns>
        </DlgTitle>
        <DlgClient>
          <DlgContent>
            <DlgHeading>你可以为源定义一些附加的选项。</DlgHeading>
            <FormList $mt={52}>
              <FormLine><FormLabel $w={164}>字段名行:</FormLabel><TextField $w={70}>1</TextField></FormLine>
              <FormLine><FormLabel $w={164}>第一个数据行:</FormLabel><TextField $w={70}>2</TextField></FormLine>
              <FormLine><FormLabel $w={164}>最后一个数据行:</FormLabel><TextField $w={70} /></FormLine>
            </FormList>
            <FormatGroup>
              <Legend>格式</Legend>
              <FormList $mt={0}>
                <FormLine><FormLabel $w={163} $right>日期排序:</FormLabel><SelectBox $w={69} $ml={16}>YMD<Tri $dir="d" $s={4} $c="#222" /></SelectBox></FormLine>
                <FormLine><FormLabel $w={163} $right>日期分隔符:</FormLabel><TextField $w={69} $ml={16} $focus>-<TextCaret /></TextField></FormLine>
                <FormLine><FormLabel $w={163} $right>时间分隔符:</FormLabel><TextField $w={69} $ml={16}>:</TextField></FormLine>
                <FormLine><FormLabel $w={163} $right>小数点符号:</FormLabel><TextField $w={69} $ml={16}>.</TextField></FormLine>
                <FormLine><FormLabel $w={163} $right>日期时间排序:</FormLabel><SelectBox $w={119} $ml={16}>日期 时间<Tri $dir="d" $s={4} $c="#222" /></SelectBox></FormLine>
              </FormList>
            </FormatGroup>
          </DlgContent>
          <DlgFooter>
            <DlgButton $w={31} $ml={0}>{'< <'}</DlgButton>
            <DlgButton $w={73} $ml={3}>{'< 上一步'}</DlgButton>
            <DlgButton $w={73} $ml={8}>{'下一步 >'}</DlgButton>
            <DlgButton $w={31} $ml={3}>{'> >'}</DlgButton>
            <DlgButton $w={73} $ml={8}>取消</DlgButton>
          </DlgFooter>
        </DlgClient>
      </Dialog>

      <AnnotLayer viewBox="0 0 1602 979">
        {ARROWS.map((p, i) => <polygon key={i} points={p} fill="#f2060c" />)}
      </AnnotLayer>
      <Note $x={598} $y={494} $size={18}>这个默认不填</Note>
      <Note $x={694} $y={574} $size={20}>YMD</Note>
      <Note $x={635} $y={619} $size={18}>这个填 -</Note>
    </Page>
  );
}
